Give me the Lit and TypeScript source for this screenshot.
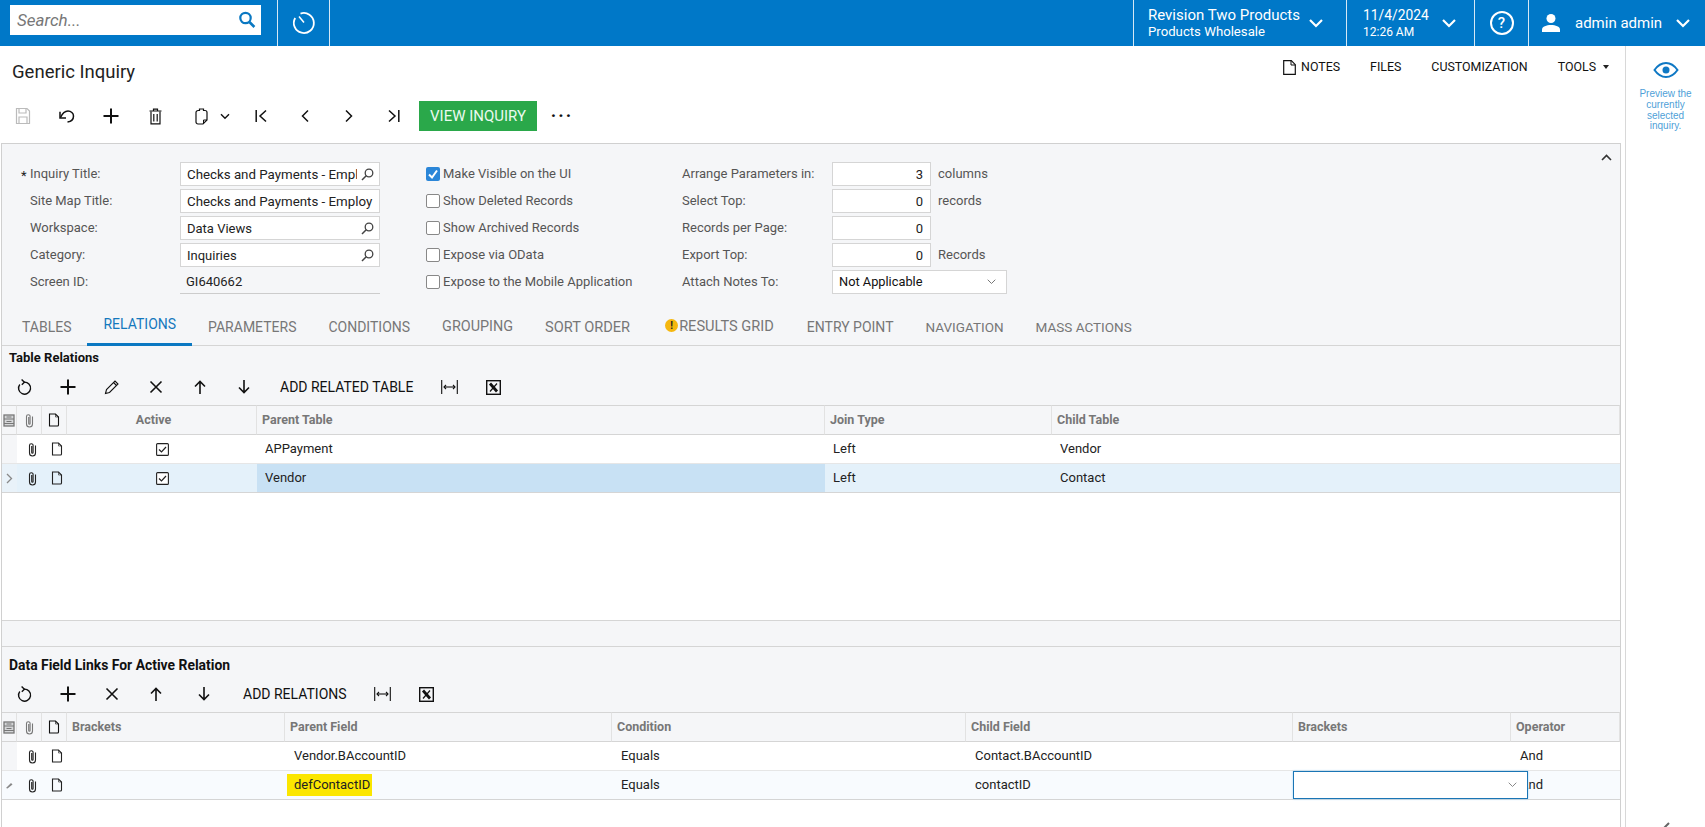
import { LitElement, html, css, svg } from "lit";
import { customElement } from "lit/decorators.js";

const ic = (w: number, h: number, body: unknown, cls = "") =>
  html`<svg class="i ${cls}" width=${w} height=${h} viewBox="0 0 ${w} ${h}" fill="none" stroke="currentColor">${body}</svg>`;

const I = {
  search: ic(20, 20, svg`<circle cx="8.5" cy="8" r="5.2" stroke-width="2.2"/><path d="M12.4 12l5 5" stroke-width="2.6"/>`),
  timer: ic(26, 26, svg`<path d="M9.5 3.6A10 10 0 1 1 4.2 8" stroke-width="1.8"/><path d="M8 6.5l5 6" stroke-width="1.5"/>`),
  chev: ic(16, 12, svg`<path d="M2 3l6 6 6-6" stroke-width="2.2"/>`),
  user: ic(22, 22, svg`<circle cx="11" cy="6.5" r="4.5" fill="currentColor" stroke="none"/><path d="M2 20v-2.5c0-3 4.5-4.5 9-4.5s9 1.500 9 4.500V20z" fill="currentColor" stroke="none"/>`),
  note: ic(13, 15, svg`<path d="M.7.7h7.6l4 4v9.600H.7z" stroke-width="1.200"/><path d="M8 .7v4.300h4.300" stroke-width="1"/>`),
  save: ic(16, 18, svg`<path d="M1.500 1.500h10.500l2.500 2.500v12.500h-13z" stroke-width="1.200"/><path d="M4 1.500v4.500h7V1.500M4 16.500v-6.500h8v6.500" stroke-width="1.200"/>`),
  undo: ic(18, 16, svg`<path d="M2.500 9.500C4.500 5 7 3 10 3c3 0 5.500 2.300 5.500 5S13.500 13.500 9.500 14" stroke-width="1.500"/><path d="M2 3.800v6.200h6" stroke-width="1.500"/>`),
  plus: ic(16, 16, svg`<path d="M8 .5v15M.5 8h15" stroke-width="2"/>`),
  trash: ic(13, 17, svg`<path d="M.5 3h12M4.500 3V1.200h4V3" stroke-width="1.200"/><path d="M2 3.500v12.300h9V3.500M4.800 6v7.500M8.200 6v7.500" stroke-width="1.200"/>`),
  clip: ic(13, 17, svg`<path d="M3 2.500h1.500V1h4v1.500H10a2 2 0 0 1 2 2V12l-4 4H3a2 2 0 0 1-2-2V4.500a2 2 0 0 1 2-2z" stroke-width="1.200"/><path d="M12 12H8.500V16" stroke-width="1"/>`),
  small: ic(10, 7, svg`<path d="M1 1.200l4 4 4-4" stroke-width="1.400"/>`),
  first: ic(13, 14, svg`<path d="M1.200 1v12" stroke-width="1.500"/><path d="M11 1.500L5 7l6 5.500" stroke-width="1.500"/>`),
  prev: ic(8, 14, svg`<path d="M7 1.500L1.500 7 7 12.500" stroke-width="1.500"/>`),
  next: ic(8, 14, svg`<path d="M1 1.500L6.500 7 1 12.500" stroke-width="1.500"/>`),
  last: ic(13, 14, svg`<path d="M11.800 1v12" stroke-width="1.500"/><path d="M2 1.500L8 7l-6 5.500" stroke-width="1.500"/>`),
  lookup: ic(13, 13, svg`<circle cx="8" cy="5" r="3.800" stroke-width="1.300"/><path d="M5.200 7.800L1 12" stroke-width="1.500"/>`),
  refresh: ic(16, 17, svg`<path d="M3.800 5.500A6 6 0 1 0 8 3.200" stroke-width="1.400"/><path d="M5.600 .5L8.400 3.200 5.800 5.800" stroke-width="1.400"/>`),
  pencil: ic(16, 16, svg`<path d="M1.500 14.500l1-4L11 2l3 3-8.500 8.500z" stroke-width="1.100"/><path d="M9.500 3.500l3 3" stroke-width="1.100"/>`),
  x: ic(14, 14, svg`<path d="M1.500 1.500l11 11M12.500 1.500l-11 11" stroke-width="1.600"/>`),
  up: ic(12, 14, svg`<path d="M6 14V1.500M1 6.500l5-5 5 5" stroke-width="1.600"/>`),
  down: ic(12, 14, svg`<path d="M6 0v12.500M1 7.500l5 5 5-5" stroke-width="1.600"/>`),
  fit: ic(17, 14, svg`<path d="M.700 0v14M16.300 0v14" stroke-width="1.100"/><path d="M3 7h11" stroke-width="1.100"/><path d="M5 5L3 7l2 2M12 5l2 2-2 2" stroke-width="1.100"/>`),
  xl: ic(15, 15, svg`<rect x=".7" y=".7" width="13.600" height="13.600" stroke-width="1.400"/><path d="M4 3.500l7 8" stroke-width="2.800"/><path d="M11 3.500l-7 8" stroke-width="1.200"/>`),
  pin: ic(11, 15, svg`<path d="M8.500 3.500v7.500a3 3 0 0 1-6 0V3.500a1.800 1.800 0 0 1 3.600 0v7a.7.7 0 0 1-1.400 0V4" stroke-width="1.100"/>`),
  doc: ic(12, 14, svg`<path d="M1.500 1h6l3 3v8a1 1 0 0 1-1 1h-8z" stroke-width="1.100"/><path d="M7.500 1v3h3" stroke-width=".6"/>`),
  cols: ic(12, 13, svg`<rect x="1" y="1" width="10" height="11" stroke-width="1.300" fill="currentColor" fill-opacity=".25"/><path d="M1 5h10M3.500 3h5M3.500 7.500h5M1 9.500h10" stroke-width="1.100"/>`),
  sel: ic(7, 11, svg`<path d="M1 1l4.500 4.500L1 10" stroke-width="1.300"/>`),
  edit: ic(10, 10, svg`<path d="M1 8l5-5 1.500 1.500-5 4z" fill="currentColor" stroke="none"/>`),
  box: ic(13, 13, svg`<rect x=".6" y=".6" width="11.800" height="11.800" rx="1" stroke-width="1.100" fill="#fff"/><path d="M3 6.500l2.500 2.500 4.500-5" stroke-width="1.200"/>`),
  dd: ic(9, 6, svg`<path d="M.7.7l3.800 3.800L8.300.7" stroke-width="1"/>`),
  fold: ic(11, 7, svg`<path d="M1 6l4.500-4.500L10 6" stroke-width="1.600"/>`),
  eye: ic(26, 18, svg`<path d="M1.500 9C5 4 9 2 13 2s8 2 11.500 7C21 14 17 16 13 16S5 14 1.500 9z" stroke-width="2"/><circle cx="13" cy="9" r="3.500" fill="currentColor" stroke="none"/>`),
  back: ic(10, 14, svg`<path d="M8 1L2 7l6 6" stroke-width="2"/>`),
  check: ic(14, 14, svg`<rect width="14" height="14" rx="2" fill="#2b86d8" stroke="none"/><path d="M3 7.500l3 3 5-7" stroke="#fff" stroke-width="2"/>`),
};

@customElement("app-root")
export class AppRoot extends LitElement {
  static styles = css`
    :host { display: flex; flex-direction: column; height: 827px; overflow: hidden; background: #fff; color: #222; font: 13px/16px Roboto, "Liberation Sans", sans-serif; }
    .i { display: block; flex: none; }
    .top { flex: none; height: 46px; display: flex; background: #0078c8; color: #fff; }
    .search { flex: none; width: 251px; height: 30px; margin: 5px 16px 0 10px; background: #fff; display: flex; align-items: center; justify-content: space-between; padding: 0 4px 0 7px; box-sizing: border-box; color: #0a78c2; }
    .search span { font: italic 17px Roboto, sans-serif; color: #777; }
    .tb { border-left: 1px solid #d5e8f5; display: flex; align-items: center; justify-content: center; box-sizing: border-box; flex: none; }
    .timer { width: 52px; }
    .sp { flex: 1; }
    .org { width: 213px; justify-content: flex-start; padding-left: 14px; gap: 8px; }
    .date { width: 128px; justify-content: flex-start; padding-left: 16px; gap: 12px; }
    .help { width: 54px; }
    .help span { width: 20px; height: 20px; border: 2px solid #fff; border-radius: 50%; text-align: center; font: 500 15px/20px Roboto, sans-serif; }
    .usr { width: 177px; justify-content: flex-start; padding-left: 11px; }
    .usr b { font-weight: 400; font-size: 15px; margin: 0 13px 0 13px; }
    .two div:first-child { font-size: 15px; line-height: 18px; }
    .two div:last-child { font-size: 13.200px; line-height: 16px; font-weight: 400; }
    .date div:first-child { font-size: 13.800px; }
    .date div:last-child { font-size: 12px; }
    .body { flex: 1; min-height: 0; display: flex; }
    .main { flex: none; width: 1625px; box-sizing: border-box; padding: 0 4px 0 1px; display: flex; flex-direction: column; min-height: 0; }
    .head { flex: none; height: 55px; display: flex; justify-content: space-between; }
    h1 { margin: 15px 0 0 11px; font: 400 18.500px/22px Roboto, sans-serif; color: #222; }
    .acts { display: flex; gap: 30px; padding: 12px 12px 0 0; line-height: 18px; font-size: 12.400px; color: #111; }
    .acts span { display: flex; align-items: center; gap: 5px; height: 18px; }
    .caret { width: 0; height: 0; border: 3.500px solid transparent; border-top: 4px solid #222; border-bottom: 0; margin-left: 2px; }
    .bar { flex: none; display: flex; align-items: center; color: #111; }
    .bar.page { height: 30px; margin-bottom: 12px; }
    .b { width: 44px; height: 30px; display: flex; align-items: center; justify-content: center; flex: none; }
    .b.dim { color: #bbb; }
    .b.wide { width: 62px; gap: 12px; padding-left: 8px; box-sizing: border-box; }
    .green { flex: none; width: 118px; height: 30px; margin-left: 4px; background: #2aa84a; color: #eafaf0; font-size: 15px; line-height: 30px; text-align: center; }
    .more { width: 50px; text-align: center; font-size: 18px; font-weight: 700; letter-spacing: 2px; line-height: 14px; }
    .panel { flex: 1; min-height: 0; display: flex; flex-direction: column; border: 1px solid #d0d0d0; background: #f5f6f8; border-bottom: 0; }
    .form { position: relative; flex: none; height: 162px; box-sizing: border-box; padding: 18px 0 0 19px; display: flex; align-items: flex-start; color: #555; }
    .collapse { position: absolute; right: 8px; top: 10px; color: #333; }
    .col1 { display: grid; grid-template-columns: 159px 200px; grid-auto-rows: 24px; row-gap: 3px; align-items: center; flex: none; }
    .lab { padding-left: 9px; position: relative; white-space: nowrap; }
    .lab i { position: absolute; left: 0; top: 2px; font-style: normal; color: #222; }
    .in { height: 24px; box-sizing: border-box; background: #fff; border: 1px solid #d5d5d5; display: flex; align-items: center; padding: 1px 5px 0 6px; color: #222; gap: 4px; }
    .in span { flex: 1; min-width: 0; overflow: hidden; white-space: nowrap; }
    .in span.long { font-size: 13.300px; }
    .in.ro { background: none; border: 0; border-bottom: 1px solid #ccc; }
    .in .i { color: #444; margin-top: -1px; }
    .col2 { flex: none; width: 256px; margin-left: 46px; display: grid; grid-auto-rows: 24px; row-gap: 3px; align-items: center; }
    .ck { display: flex; align-items: center; gap: 3px; white-space: nowrap; }
    .ck u { width: 14px; height: 14px; box-sizing: border-box; border: 1px solid #888; border-radius: 2px; background: #fff; flex: none; }
    .col3 { display: grid; grid-template-columns: 150px 99px 80px; grid-auto-rows: 24px; row-gap: 3px; align-items: center; }
    .num { justify-content: flex-end; padding-right: 7px; }
    .num span { flex: none; }
    .unit { margin-left: 7px; }
    .selb { grid-column: 2 / 4; width: 175px; justify-content: space-between; padding: 0 10px 0 6px; color: #111; font-size: 12.800px; }
    .selb .i { color: #777; }
    .tabs { flex: none; height: 40px; box-sizing: border-box; border-bottom: 1px solid #d5d5d5; padding-left: 4px; display: flex; color: #777; font-size: 14px; }
    .tab { padding: 2px 16px 0; display: flex; align-items: center; gap: 1px; height: 40px; box-sizing: border-box; white-space: nowrap; }
    .tab.on { color: #1478bd; border-bottom: 3px solid #0a78c2; padding-top: 0; padding-bottom: 1px; }
    .tab.wider { font-size: 14.400px; }
    .tab.widest { font-size: 14.600px; }
    .tab.warned { margin: 0 1px 0 4px; padding-top: 0; padding-bottom: 1px; }
    .tab.nar { font-size: 13.500px; }
    .warn { width: 13px; height: 13px; border-radius: 50%; background: #f5b70f; color: #222; font: 700 10px/13px Roboto, sans-serif; text-align: center; margin-left: -1px; }
    .sec1 { flex: none; height: 275px; display: flex; flex-direction: column; border-bottom: 1px solid #d5d5d5; box-sizing: border-box; }
    .split { flex: none; height: 26px; box-sizing: border-box; border-bottom: 1px solid #d5d5d5; }
    .sec2 { flex: 1; min-height: 0; display: flex; flex-direction: column; }
    .sec1 .t { height: 26px; line-height: 23px; }
    .sec2 .t { height: 32px; line-height: 36px; font-size: 13.900px; }
    .t { flex: none; padding-left: 7px; font-weight: 700; font-size: 13px; color: #111; box-sizing: border-box; }
    .bar.g { height: 33px; padding-bottom: 3px; box-sizing: border-box; }
    .txt { flex: none; padding: 0 14px; line-height: 30px; color: #111; font-size: 14px; white-space: nowrap; }
    .nudge { margin-left: 4px; }
    .nudge3 { margin-left: 3px; }
    .grid { flex: 1; display: grid; grid-template-rows: 30px 29px 29px; grid-auto-rows: 1fr; align-content: start; background: #fff; min-height: 0; }
    .g1 { grid-template-columns: 15px 25px 25px 190px 568px 227px 1fr; }
    .g2 { grid-template-columns: 15px 25px 25px 218px 327px 354px 327px 218px 1fr; }
    .h { background: #f5f6f8; border-top: 1px solid #d5d5d5; border-bottom: 1px solid #d5d5d5; border-right: 1px solid #e2e2e2; box-sizing: border-box; display: flex; align-items: center; padding-left: 5px; color: #777; font-weight: 700; font-size: 12.500px; }
    .h.ic { padding: 0; justify-content: center; }
    .h.dark { color: #111; }
    .h.ctr { justify-content: center; padding: 0 16px 0 0; }
    .c { border-bottom: 1px solid #e6e6e6; box-sizing: border-box; display: flex; align-items: center; padding-left: 8px; color: #222; position: relative; font-size: 13px; }
    .c.last { border-bottom-color: #d5d5d5; }
    .c.ic { padding: 0 0 0 5px; justify-content: center; color: #222; }
    .c.ctr { padding: 0; justify-content: center; }
    .c.s { padding: 0; justify-content: center; background: #f5f6f8; color: #888; }
    .c.act { background: #e4f1fa; }
    .c.hot { background: #c8e1f4; }
    .c.pale { background: #f8fbfe; }
    .c.s.act { background: #e9f2f9; }
    .c.p9 { padding-left: 9px; }
    mark { background: #fbe600; color: #222; margin-left: -7px; padding: 3px 2px 3px 7px; }
    .editor { position: absolute; left: 0; top: 0; z-index: 2; width: 235px; height: 28px; box-sizing: border-box; background: #fff; border: 1px solid #1a75b5; box-shadow: 0 0 2px #9fd3f5; display: flex; align-items: center; justify-content: flex-end; padding-right: 10px; color: #888; }
    .side { flex: none; width: 80px; box-sizing: border-box; border-left: 1px solid #d8d8d8; display: flex; flex-direction: column; align-items: center; overflow: hidden; padding-top: 15px; color: #0f78c4; }
    .side p { margin: 10px 0 0; text-align: center; font: 10px/10.800px "Liberation Sans", sans-serif; color: #4f9fd8; width: 70px; }
    .side .back { margin-top: auto; margin-bottom: -9px; color: #666; }
  `;

  private row(label: string, val: string, icon = true, req = false, ro = false) {
    return html`<div class="lab">${req ? html`<i>*</i>` : ""}${label}</div>
      <div class="in ${ro ? "ro" : ""}"><span class=${val.length > 20 ? "long" : ""}>${val}</span>${icon ? I.lookup : ""}</div>`;
  }
  private num(label: string, v: string, unit: string) {
    return html`<div>${label}</div><div class="in num"><span>${v}</span></div><div class="unit">${unit}</div>`;
  }
  private leads(first: unknown, last: boolean, cls: string) {
    return html`<div class="c s ${cls} ${last ? "last" : ""}">${first}</div>
      <div class="c ic ${cls} ${last ? "last" : ""}">${I.pin}</div>
      <div class="c ic ${cls} ${last ? "last" : ""}">${I.doc}</div>`;
  }
  private heads(rest: unknown) {
    return html`<div class="h ic">${I.cols}</div><div class="h ic">${I.pin}</div><div class="h ic dark">${I.doc}</div>${rest}`;
  }

  render() {
    return html`
      <div class="top">
        <div class="search"><span>Search...</span>${I.search}</div>
        <div class="tb timer">${I.timer}</div>
        <div class="tb sp"></div>
        <div class="tb org two"><div><div>Revision Two Products</div><div>Products Wholesale</div></div>${I.chev}</div>
        <div class="tb date two"><div><div>11/4/2024</div><div>12:26 AM</div></div>${I.chev}</div>
        <div class="tb help"><span>?</span></div>
        <div class="tb usr">${I.user}<b>admin admin</b>${I.chev}</div>
      </div>
      <div class="body">
        <div class="main">
          <div class="head">
            <h1>Generic Inquiry</h1>
            <div class="acts">
              <span>${I.note}NOTES</span><span>FILES</span><span>CUSTOMIZATION</span><span>TOOLS<u class="caret"></u></span>
            </div>
          </div>
          <div class="bar page">
            <div class="b dim">${I.save}</div><div class="b">${I.undo}</div><div class="b">${I.plus}</div><div class="b">${I.trash}</div>
            <div class="b wide">${I.clip}${I.small}</div>
            <div class="b">${I.first}</div><div class="b">${I.prev}</div><div class="b">${I.next}</div><div class="b">${I.last}</div>
            <div class="green">VIEW INQUIRY</div><div class="more">···</div>
          </div>
          <div class="panel">
            <div class="form">
              <div class="col1">
                ${this.row("Inquiry Title:", "Checks and Payments - Empl", true, true)}
                ${this.row("Site Map Title:", "Checks and Payments - Employ", false)}
                ${this.row("Workspace:", "Data Views")}
                ${this.row("Category:", "Inquiries")}
                ${this.row("Screen ID:", "GI640662", false, false, true)}
              </div>
              <div class="col2">
                <div class="ck">${I.check}Make Visible on the UI</div>
                <div class="ck"><u></u>Show Deleted Records</div>
                <div class="ck"><u></u>Show Archived Records</div>
                <div class="ck"><u></u>Expose via OData</div>
                <div class="ck"><u></u>Expose to the Mobile Application</div>
              </div>
              <div class="col3">
                ${this.num("Arrange Parameters in:", "3", "columns")}
                ${this.num("Select Top:", "0", "records")}
                ${this.num("Records per Page:", "0", "")}
                ${this.num("Export Top:", "0", "Records")}
                <div>Attach Notes To:</div>
                <div class="in selb">Not Applicable${I.dd}</div>
              </div>
              <div class="collapse">${I.fold}</div>
            </div>
            <div class="tabs">
              <div class="tab">TABLES</div><div class="tab on">RELATIONS</div><div class="tab">PARAMETERS</div><div class="tab">CONDITIONS</div>
              <div class="tab wider">GROUPING</div><div class="tab widest">SORT ORDER</div><div class="tab widest warned"><span class="warn">!</span>RESULTS GRID</div>
              <div class="tab">ENTRY POINT</div><div class="tab nar">NAVIGATION</div><div class="tab nar">MASS ACTIONS</div>
            </div>
            <div class="sec1">
              <div class="t">Table Relations</div>
              <div class="bar g">
                <div class="b">${I.refresh}</div><div class="b">${I.plus}</div><div class="b">${I.pencil}</div><div class="b">${I.x}</div><div class="b">${I.up}</div><div class="b">${I.down}</div>
                <div class="txt">ADD RELATED TABLE</div><div class="b">${I.fit}</div><div class="b">${I.xl}</div>
              </div>
              <div class="grid g1">
                ${this.heads(html`<div class="h ctr">Active</div><div class="h">Parent Table</div><div class="h">Join Type</div><div class="h">Child Table</div>`)}
                ${this.leads("", false, "")}
                <div class="c ctr">${I.box}</div><div class="c">APPayment</div><div class="c">Left</div><div class="c">Vendor</div>
                ${this.leads(I.sel, true, "act")}
                <div class="c ctr act last">${I.box}</div><div class="c hot last">Vendor</div><div class="c act last">Left</div><div class="c act last">Contact</div>
              </div>
            </div>
            <div class="split"></div>
            <div class="sec2">
              <div class="t">Data Field Links For Active Relation</div>
              <div class="bar g">
                <div class="b">${I.refresh}</div><div class="b">${I.plus}</div><div class="b">${I.x}</div><div class="b">${I.up}</div><div class="b nudge">${I.down}</div>
                <div class="txt nudge3">ADD RELATIONS</div><div class="b">${I.fit}</div><div class="b">${I.xl}</div>
              </div>
              <div class="grid g2">
                ${this.heads(html`<div class="h">Brackets</div><div class="h">Parent Field</div><div class="h">Condition</div><div class="h">Child Field</div><div class="h">Brackets</div><div class="h">Operator</div>`)}
                ${this.leads("", false, "")}
                <div class="c"></div><div class="c p9">Vendor.BAccountID</div><div class="c p9">Equals</div><div class="c p9">Contact.BAccountID</div><div class="c"></div><div class="c p9">And</div>
                ${this.leads(I.edit, true, "pale")}
                <div class="c pale last"></div><div class="c p9 pale last"><mark>defContactID</mark></div><div class="c p9 pale last">Equals</div><div class="c p9 pale last">contactID</div>
                <div class="c pale last"><div class="editor">${I.dd}</div></div><div class="c p9 pale last">And</div>
              </div>
            </div>
          </div>
        </div>
        <div class="side">
          ${I.eye}
          <p>Preview the currently selected inquiry.</p>
          <div class="back">${I.back}</div>
        </div>
      </div>
    `;
  }
}
